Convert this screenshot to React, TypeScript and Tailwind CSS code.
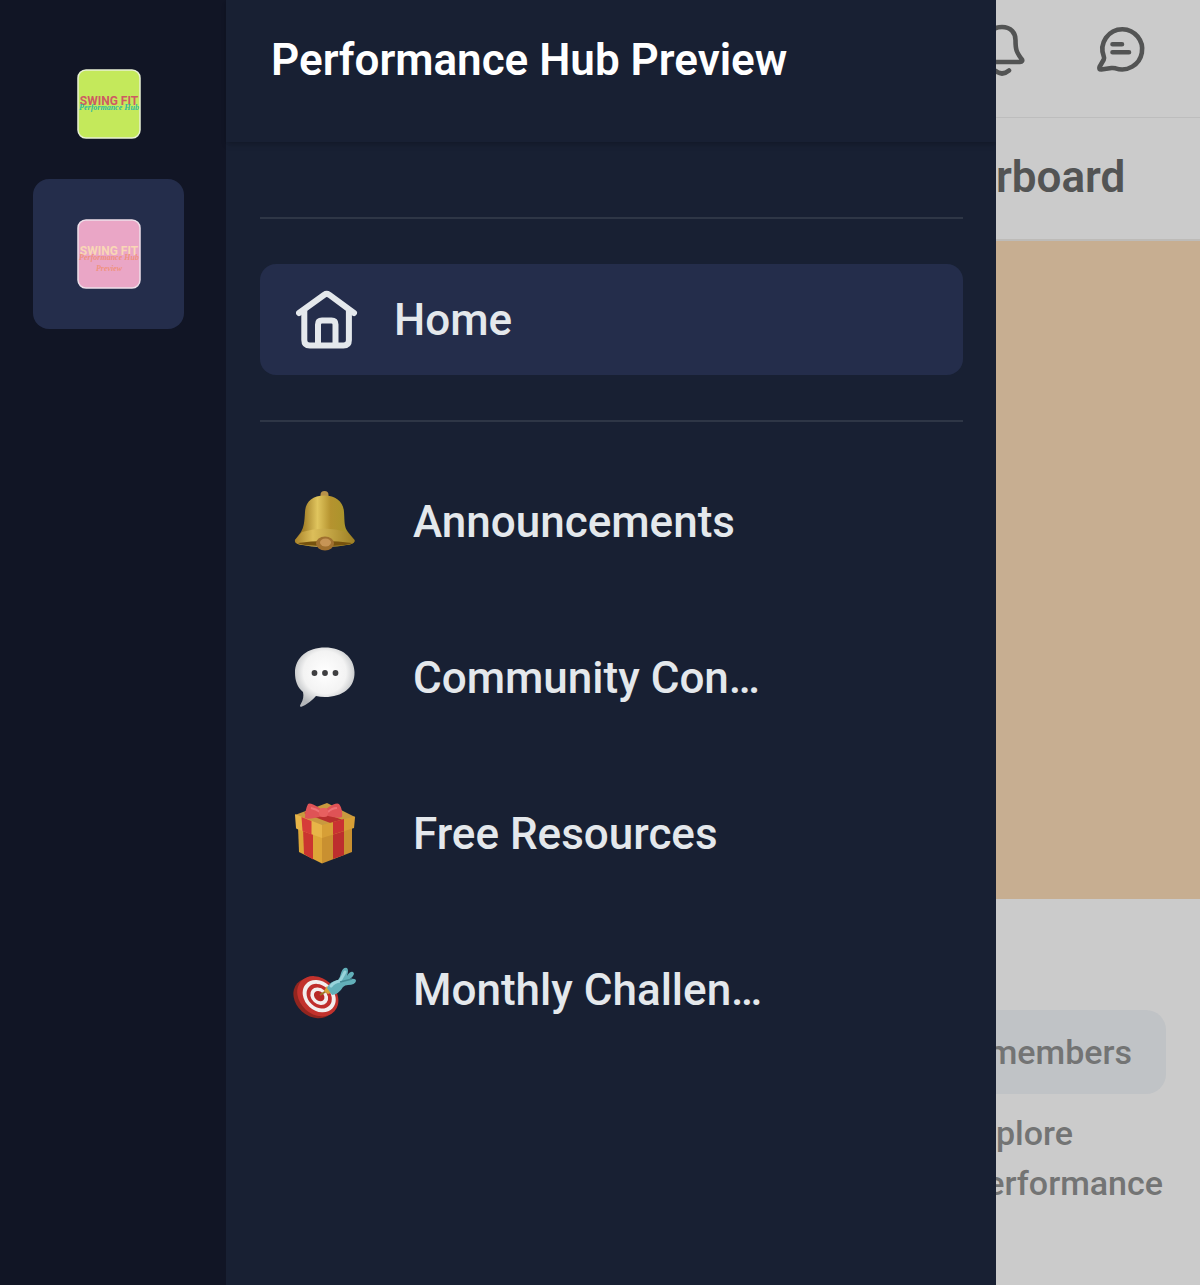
function HomeIcon() {
    return (
        <svg width="62" height="60" viewBox="0 0 62 60" fill="none" stroke="#e4e8ec" strokeWidth="6" strokeLinecap="round" strokeLinejoin="round" aria-hidden="true">
            <path d="M3 23 28.300 4.700q2.400-1.600 4.800 0L58 23" />
            <path d="M8.300 21v29q0 5.500 5.500 5.500h33.600q5.500 0 5.500-5.500V21" />
            <path d="M22 55V34.500q0-4 4-4h9.500q4 0 4 4V55" />
        </svg>
    );
}

function BellEmoji() {
    return (
        <svg width="62" height="62" viewBox="0 0 62 62" aria-hidden="true">
            <defs>
                <linearGradient id="bellBody" x1="0" x2="1">
                    <stop offset="0" stopColor="#8c6a1d" />
                    <stop offset=".15" stopColor="#a5822a" />
                    <stop offset=".38" stopColor="#e0c55e" />
                    <stop offset=".6" stopColor="#b5932f" />
                    <stop offset=".85" stopColor="#aa942b" />
                    <stop offset="1" stopColor="#75601a" />
                </linearGradient>
                <linearGradient id="bellRim" x1="0" x2="1">
                    <stop offset="0" stopColor="#a9832a" />
                    <stop offset=".3" stopColor="#dcbe5a" />
                    <stop offset="1" stopColor="#9d7f24" />
                </linearGradient>
            </defs>
            <circle cx="30.500" cy="4" r="4" fill="#b8924a" />
            <path d="M30.500 4.500C18 4.500 11.500 11 11 21c-.6 10-1 15-4 20L1 49q-1 3 4 4.500 25 5 51 0 5-1.500 4.500-4.500L54 41c-4-5-3.300-10-4-20C49.500 11 42 4.500 30.500 4.500Z" fill="url(#bellBody)" />
            <path d="M8 41q22-7 45 0l7.500 8q1 3-5 4.500-25 4-50 0-5-1.500-4.500-4.500Z" fill="url(#bellRim)" />
            <path d="M4 52q26-4 54 0-4 3-27 3T4 52Z" fill="#76520e" />
            <ellipse cx="31" cy="52.500" rx="9" ry="7" fill="#a0702f" />
            <ellipse cx="31.500" cy="51.500" rx="5.500" ry="4" fill="#c79556" />
        </svg>
    );
}

function SpeechEmoji() {
    return (
        <svg width="62" height="62" viewBox="0 0 62 62" aria-hidden="true">
            <defs>
                <radialGradient id="speech" cx=".5" cy=".42" r=".58">
                    <stop offset="0" stopColor="#ffffff" />
                    <stop offset=".62" stopColor="#f3f3f3" />
                    <stop offset="1" stopColor="#b4b7ba" />
                </radialGradient>
            </defs>
            <path d="M31 .5C48 .5 60 10 60.500 25 61 41 48 50 31 50q-5 0-9-1-6 7-14 10.500-3 .8-1.500-2 4-6 2.500-12.500C3 40 1 33 1 26 1 10 14 .5 31 .5Z" fill="url(#speech)" />
            <circle cx="20.500" cy="26" r="2.900" fill="#3f3f41" />
            <circle cx="31" cy="26" r="2.900" fill="#3f3f41" />
            <circle cx="41.500" cy="26" r="2.900" fill="#3f3f41" />
        </svg>
    );
}

function GiftEmoji() {
    return (
        <svg width="62" height="62" viewBox="0 0 62 62" aria-hidden="true">
            <path d="M4 23 28 31v29.500L5 49Z" fill="#dda638" />
            <path d="M28 31 58 22v27L28 60.500Z" fill="#c99030" />
            <path d="M9 26 19 30v26.500L10 51Z" fill="#cb3430" />
            <path d="M39 27 50 23v29l-11 4Z" fill="#bd2e2e" />
            <path d="M1 12 33 0l28 14-33 10Z" fill="#c9993f" />
            <path d="M10 10 18 6 49 17 39 21Z" fill="#b9302e" />
            <path d="M1 12q0-1 1-.6L28 22v13L3 26q-1-.5-1-1Z" fill="#e8b548" />
            <path d="m28 22 32-8.500q1 0 1 1L60 25 28 35Z" fill="#d79f36" />
            <path d="M7.500 14 17.500 18v13.500L8.500 28Z" fill="#d63c39" />
            <path d="m39 19 11-3v12l-11 3.500Z" fill="#ca3232" />
            <path d="M27 6Q16-1 14 1q-3 6-3 14 4 2 17-2ZM32 6Q42-1 45 1q4 5 3 13-4 2-17-2Z" fill="#df5356" />
            <path d="M17 5q5 1 9 4M43 5q-5 0-9 4" stroke="#ee7175" strokeWidth="2" fill="none" />
            <rect x="25" y="5" width="9" height="9" rx="3.500" fill="#e7605f" />
        </svg>
    );
}

function TargetEmoji() {
    return (
        <svg width="62" height="62" viewBox="0 0 62 62" className="overflow-visible" aria-hidden="true">
            <g transform="translate(0 3) rotate(42 22 34)">
                <ellipse cx="22" cy="37" rx="22.500" ry="18" fill="#92251f" />
                <ellipse cx="23.500" cy="33" rx="22.500" ry="18" fill="#c2322d" />
                <ellipse cx="24.500" cy="32" rx="18" ry="14.500" fill="#f3eeee" />
                <ellipse cx="24.500" cy="32" rx="13.800" ry="11" fill="#c02e2c" />
                <ellipse cx="24.500" cy="32" rx="9.800" ry="7.800" fill="#f3eeee" />
                <ellipse cx="24.500" cy="32" rx="5.800" ry="4.500" fill="#b82926" />
            </g>
            <path d="m26 36 8-5" stroke="#9c7624" strokeWidth="2" />
            <path d="m30 32 3-5 6 6-5 2Z" fill="#d6a338" />
            <path d="M33 29q3-7 11-8 2-2 3-7 2-6 6-5 2 2 0 8 3-5 6-4 3 2-3 7 6-1 6 2-1 4-8 4-3 0-5 2-4 7-11 8Z" fill="#62afb9" />
            <path d="M37 27q3-4 9-5l5-9" stroke="#98d3db" strokeWidth="3" strokeLinecap="round" fill="none" />
            <path d="m46 23 12-3" stroke="#438994" strokeWidth="1.500" />
        </svg>
    );
}

const channels = [
    { label: 'Announcements', icon: <BellEmoji /> },
    { label: 'Community Con…', icon: <SpeechEmoji /> },
    { label: 'Free Resources', icon: <GiftEmoji /> },
    { label: 'Monthly Challen…', icon: <TargetEmoji /> },
];

export default function App() {
    return (
        <div className="flex min-h-screen bg-[#cbcbcb] font-['Roboto',sans-serif]">
            <div className="flex w-[83%] shrink-0 overflow-hidden bg-[#182033]">
                <aside className="flex w-[226px] shrink-0 flex-col items-start bg-[#111525] pl-[33px] pt-7">
                    <button className="flex h-[151px] w-[151px] items-center justify-center rounded-2xl">
                        <svg width="64" height="70" viewBox="0 0 64 70">
                            <rect x="1" y="1" width="62" height="68" rx="8" fill="#c4e95b" stroke="#e8f0d4" strokeWidth="1.500" />
                            <text x="32" y="36" textAnchor="middle" fontFamily="Roboto, sans-serif" fontWeight="700" fontSize="12" fill="#cf5b62">SWING FIT</text>
                            <text x="32" y="41" textAnchor="middle" fontFamily="Liberation Serif, serif" fontStyle="italic" fontWeight="700" fontSize="8" fill="#31bba0">Performance Hub</text>
                        </svg>
                    </button>
                    <button className="flex h-[150px] w-[151px] items-center justify-center rounded-2xl bg-[#242d4b]">
                        <svg width="64" height="70" viewBox="0 0 64 70">
                            <rect x="1" y="1" width="62" height="68" rx="8" fill="#eaa6c6" stroke="#eee0ea" strokeWidth="1.500" />
                            <text x="32" y="36" textAnchor="middle" fontFamily="Roboto, sans-serif" fontWeight="700" fontSize="12" fill="#f9d7b5">SWING FIT</text>
                            <text x="32" y="41" textAnchor="middle" fontFamily="Liberation Serif, serif" fontStyle="italic" fontWeight="700" fontSize="8" fill="#f0927f">Performance Hub</text>
                            <text x="32" y="52" textAnchor="middle" fontFamily="Liberation Serif, serif" fontStyle="italic" fontWeight="700" fontSize="8" fill="#f0927f">Preview</text>
                        </svg>
                    </button>
                </aside>

                <div className="min-w-0 flex-1">
                    <header className="h-[142px] px-[45px] pt-8 shadow-md shadow-black/15">
                        <h1 className="whitespace-nowrap text-[44px] font-semibold leading-[56px] text-white">Performance Hub Preview</h1>
                    </header>
                    <nav className="pl-[34px] pr-[33px] pt-[75px]">
                        <div className="border-y-2 border-[#2e3646] py-[45px]">
                            <a href="#home" className="flex h-[111px] items-center gap-9 rounded-2xl bg-[#242d4b] px-9 text-[44px] font-medium leading-[56px] text-[#e4e8ec]">
                                <HomeIcon />
                                Home
                            </a>
                        </div>
                        <ul className="pt-[22px]">
                            {channels.map((channel) => (
                                <li key={channel.label}>
                                    <a href="#channel" className="flex h-[156px] items-center gap-[57px] px-[34px] text-[44px] font-medium leading-[56px] text-[#e4e8ec]">
                                        <span className="shrink-0">{channel.icon}</span>
                                        <span className="truncate">{channel.label}</span>
                                    </a>
                                </li>
                            ))}
                        </ul>
                    </nav>
                </div>
            </div>

            <main className="min-w-0 flex-1 overflow-hidden bg-[#cbcbcb] text-[#535454]">
                <div className="flex h-[118px] justify-end gap-[70px] border-b border-[#bdbdbd] pr-[54px] pt-6">
                    <button aria-label="Notifications" className="shrink-0 self-start">
                        <svg width="48" height="54" viewBox="0 0 48 54" fill="none" stroke="#535454" strokeWidth="4.600" strokeLinecap="round" strokeLinejoin="round">
                            <path d="M24 3C15 3 10.500 9 10.500 16c0 10-1 12-6 19-1.500 2 0 3 1.500 3h36c2 0 3-1.500 1.500-3-5-7-6-9-6-19C37.500 9 33 3 24 3Z" />
                            <path d="M17 46.500q7 6 14 0" />
                        </svg>
                    </button>
                    <button aria-label="Messages" className="shrink-0 self-start">
                        <svg width="50" height="50" viewBox="0 0 50 50" fill="none" stroke="#535454" strokeWidth="4.600" strokeLinecap="round" strokeLinejoin="round">
                            <path d="M26.500 5.200A20 20 0 0 0 7.800 32.500q.7 1.700 0 3L3.500 43q-1 2.500 1.700 2.500L15.500 44q2-.2 4 .3A20.100 20.100 0 1 0 26.500 5.200Z" />
                            <path d="M16.500 20.300h9.500M16.500 28.300h16.500" />
                        </svg>
                    </button>
                </div>
                <div className="flex h-[123px] items-center border-b-2 border-[#bdbbb8] pb-1">
                    <h2 className="text-[44px] font-semibold leading-[56px]">rboard</h2>
                </div>
                <div className="h-[658px] bg-[#c7ae91]" />
                <section className="pt-[111px] text-[34px] font-medium leading-[50px] text-[#737474]">
                    <div className="mr-[34px] flex h-[84px] items-center justify-end rounded-r-[20px] bg-[#c0c3c6] pr-[34px]">
                        <span>members</span>
                    </div>
                    <p className="pt-[14px]">plore</p>
                    <p className="flex justify-end pr-[37px]">
                        <span>erformance</span>
                    </p>
                </section>
            </main>
        </div>
    );
}
